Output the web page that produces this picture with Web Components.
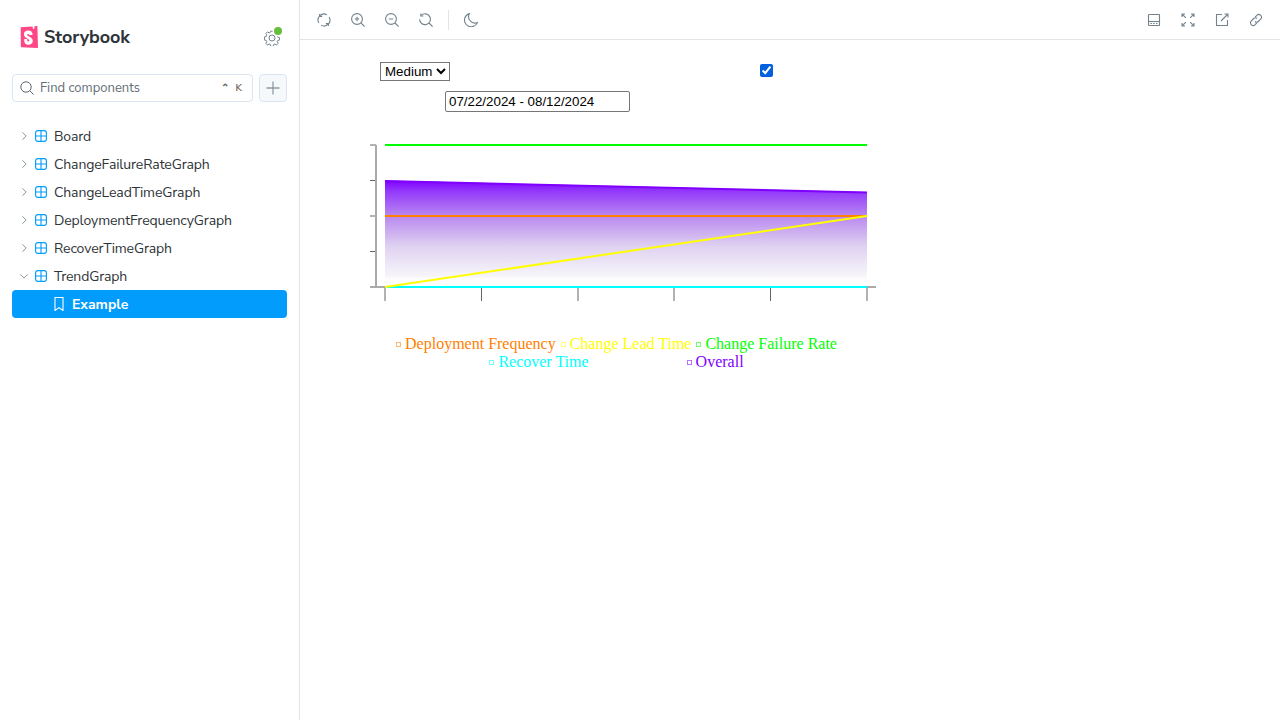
<!DOCTYPE html>
<html>
<head>
<meta charset="utf-8">
<title>Storybook</title>
<style>
  html, body { margin: 0; height: 100%; background: #fff; }
  body { display: flex; width: 1280px; height: 720px; overflow: hidden; }
</style>
</head>
<body>
<sb-sidebar>
  <sb-tree-item kind="component" label="Board"></sb-tree-item>
  <sb-tree-item kind="component" label="ChangeFailureRateGraph"></sb-tree-item>
  <sb-tree-item kind="component" label="ChangeLeadTimeGraph"></sb-tree-item>
  <sb-tree-item kind="component" label="DeploymentFrequencyGraph"></sb-tree-item>
  <sb-tree-item kind="component" label="RecoverTimeGraph"></sb-tree-item>
  <sb-tree-item kind="component" label="TrendGraph" open></sb-tree-item>
  <sb-tree-item kind="story" label="Example" selected></sb-tree-item>
</sb-sidebar>
<sb-main>
  <trend-graph></trend-graph>
</sb-main>

<script>
const ICONS = {
  sync: '<path d="M1.9 10A5.9 5.9 0 0 1 10 1.900M12.100 4A5.900 5.900 0 0 1 4 12.100"/><path d="M2.600 1l.1 2.500 2.500-.1M11.400 13l-.1-2.500-2.500.1"/>',
  zoomIn: '<circle cx="6" cy="6" r="5.400"/><path d="M10 10l3.600 3.600M6 3.800v4.400M3.800 6h4.400"/>',
  zoomOut: '<circle cx="6" cy="6" r="5.400"/><path d="M10 10l3.600 3.600M3.800 6h4.400"/>',
  zoomReset: '<path d="M2.300 2.300A5.400 5.400 0 1 1 .6 6.200M10 10l3.600 3.600"/><path d="M1.800 .6v2.400h2.600"/>',
  moon: '<path d="M5.400 .6a6.400 6.400 0 0 0 8 9A6.700 6.700 0 1 1 5.400 .6z"/>',
  panel: '<rect x="1.500" y="1.500" width="11" height="11" rx=".4"/><path d="M1.500 8.500h11"/><path d="M3.400 10.500h1.500M6.200 10.500h1.500M9 10.500h1.500"/>',
  expand: '<path d="M1 4V1h3M10 1h3v3M13 10v3h-3M4 13H1v-3M1.200 1.200l3.600 3.600M12.800 1.200L9.200 4.800M12.800 12.800L9.200 9.200M1.200 12.800l3.600-3.600"/>',
  share: '<path d="M7 1.500H1.500v11h11V7"/><path d="M6 8l7-7M9.500 1H13v3.500"/>',
  link: '<path d="M6.100 4.100l2-2a2.300 2.300 0 0 1 3.300 0l.5.5a2.300 2.300 0 0 1 0 3.300L9.300 8.500a2.300 2.300 0 0 1-3.300 0"/><path d="M7.900 9.900l-2 2a2.300 2.300 0 0 1-3.300 0l-.5-.5a2.300 2.300 0 0 1 0-3.300L4.700 5.500a2.300 2.300 0 0 1 3.300 0"/>',
  search: '<circle cx="6" cy="6" r="5.200"/><path d="M9.800 9.800l3.700 3.700"/>',
  plus: '<path d="M7 .5v13M.5 7h13"/>',
  bookmark: '<path d="M3 .5h8v13L7 10.600 3 13.500z"/>',
  component: '<rect x=".7" y=".7" width="12.600" height="12.600" rx="2.600"/><path d="M7 .7v12.600M.7 7h12.600"/>',
  right: '<path d="M4.800 1.800L10 7l-5.200 5.200"/>',
  down: '<path d="M1.800 4.800L7 10l5.200-5.200"/>'
};

function icon(name, size, color, width) {
  return `<svg width="${size}" height="${size}" viewBox="0 0 14 14" fill="none" stroke="${color}" stroke-width="${width || 1}">${ICONS[name]}</svg>`;
}

class SbSidebar extends HTMLElement {
  constructor() {
    super();
    this.attachShadow({ mode: "open" });
  }

  connectedCallback() {
    this.shadowRoot.innerHTML = `
      <style>
        :host {
          display: block;
          width: 299px;
          flex: none;
          height: 100%;
          border-right: 1px solid #e4e4e4;
          font-family: "Nunito Sans", "Noto Sans", sans-serif;
          color: #2e3438;
        }
        .head {
          display: flex;
          align-items: center;
          justify-content: space-between;
          height: 22px;
          padding: 26px 19px 0 20px;
        }
        .brand { display: flex; align-items: center; gap: 6px; }
        .brand span {
          font-size: 18px;
          font-weight: 700;
          letter-spacing: -.1px;
        }
        .gear { position: relative; width: 16px; height: 16px; margin-top: 2px; }
        .gear i {
          position: absolute;
          right: -2px;
          top: -3px;
          width: 8px;
          height: 8px;
          border-radius: 50%;
          background: #66bf3c;
          box-shadow: 0 0 0 1.500px #fff;
        }
        .search-row {
          display: flex;
          gap: 6px;
          margin: 26px 12px 20px;
        }
        .search {
          flex: 1;
          height: 26px;
          display: flex;
          align-items: center;
          gap: 6px;
          padding: 0 10px 0 7px;
          border: 1px solid #d9e6f1;
          border-radius: 4px;
          font-size: 13px;
          color: #646e78;
        }
        .search .txt { flex: 1; }
        .search .keys { display: flex; gap: 7px; font-size: 10px; font-weight: 600; color: #6b6258; }
        .add {
          width: 26px;
          height: 26px;
          flex: none;
          display: grid;
          place-items: center;
          border: 1px solid #d9e6f1;
          border-radius: 4px;
          background: #f6f9fc;
        }
        .tree { margin: 0 12px; }
      </style>
      <div class="head">
        <div class="brand">
          <svg width="18" height="22" viewBox="0 0 18 22">
            <path d="M.7 1.200L12.800 .5l-.1 2.300 1.700-.1.100-2.400L17.400 0 18 21.300a.7.700 0 0 1-.7.700L1.500 21.300a.7.700 0 0 1-.7-.7z" fill="#ff4785"/>
            <path d="M9.300 8.800c0 .4 2.900.2 3.300-.1 0-2.800-1.500-4.300-4.300-4.300S3.900 5.900 3.900 8.200c0 4 5.400 4.100 5.400 6.300 0 .6-.3 1-.9 1-.9 0-1.200-.4-1.200-2.100 0-.4-2.900-.4-3 0-.2 4.100 2.300 5.300 4.200 5.300 2.500 0 4.400-1.300 4.400-3.700 0-4.200-5.500-4.100-5.500-6.200 0-.8.500-.9.900-.9.400 0 1.100.1 1.100 1.900z" fill="#fff"/>
          </svg>
          <span>Storybook</span>
        </div>
        <div class="gear">
          <svg width="16" height="16" viewBox="0 0 16 16" fill="none" stroke="#73828c" stroke-width="1">
            <circle cx="8" cy="8" r="3"/>
            <path d="M6.800 1.200h2.400l.4 1.800 1.300.6 1.600-1 1.700 1.700-1 1.600.6 1.300 1.800.4v2.400l-1.800.4-.6 1.300 1 1.600-1.700 1.700-1.600-1-1.300.6-.4 1.800H6.800l-.4-1.800-1.300-.6-1.600 1-1.700-1.700 1-1.600-.6-1.300-1.800-.4V6.900l1.800-.4.600-1.300-1-1.600 1.700-1.700 1.600 1 1.300-.6z"/>
          </svg>
          <i></i>
        </div>
      </div>
      <div class="search-row">
        <div class="search">
          ${icon("search", 14, "#5c6870")}
          <span class="txt">Find components</span>
          <span class="keys"><span>⌃</span><span>K</span></span>
        </div>
        <div class="add">${icon("plus", 14, "#8e9ba5", 1.3)}</div>
      </div>
      <div class="tree"><slot></slot></div>
    `;
  }
}
customElements.define("sb-sidebar", SbSidebar);

class SbTreeItem extends HTMLElement {
  constructor() {
    super();
    this.attachShadow({ mode: "open" });
  }

  connectedCallback() {
    const label = this.getAttribute("label");
    const isStory = this.getAttribute("kind") === "story";
    const lead = isStory
      ? `<span class="pad"></span>${icon("bookmark", 14, "#fff", 1.1)}`
      : `${icon(this.hasAttribute("open") ? "down" : "right", 10, "#73828c", 1.2)}${icon("component", 12, "#029cfd", 1.3)}`;
    this.shadowRoot.innerHTML = `
      <style>
        :host {
          display: flex;
          align-items: center;
          height: 28px;
          padding-left: 7px;
          font-size: 14px;
          letter-spacing: -.13px;
          border-radius: 4px;
          box-sizing: border-box;
        }
        :host([selected]) {
          background: #029cfd;
          color: #fff;
          font-weight: 700;
          letter-spacing: 0;
        }
        svg { flex: none; }
        svg + svg { margin-left: 6px; }
        .pad { width: 33px; }
        .label { margin-left: 7px; }
        :host([selected]) .label { margin-left: 6px; }
      </style>
      ${lead}<span class="label">${label}</span>
    `;
  }
}
customElements.define("sb-tree-item", SbTreeItem);

class SbToolButton extends HTMLElement {
  constructor() {
    super();
    this.attachShadow({ mode: "open" });
  }

  connectedCallback() {
    this.shadowRoot.innerHTML = `
      <style>
        :host {
          display: grid;
          place-items: center;
          width: 28px;
          height: 28px;
        }
      </style>
      ${icon(this.getAttribute("icon"), 14, "#73828c", 1.1)}
    `;
  }
}
customElements.define("sb-tool-button", SbToolButton);

class SbMain extends HTMLElement {
  constructor() {
    super();
    this.attachShadow({ mode: "open" });
  }

  connectedCallback() {
    this.shadowRoot.innerHTML = `
      <style>
        :host {
          display: flex;
          flex-direction: column;
          flex: 1;
          min-width: 0;
        }
        .bar {
          display: flex;
          align-items: center;
          justify-content: space-between;
          flex: none;
          height: 39px;
          padding: 0 10px;
          border-bottom: 1px solid #e4e4e4;
        }
        .tools { display: flex; align-items: center; gap: 6px; }
        .sep { width: 1px; height: 20px; background: #e4e4e4; margin: 0 2px; }
        .canvas { flex: 1; padding: 22px 0 0 80px; }
      </style>
      <div class="bar">
        <div class="tools">
          <sb-tool-button icon="sync"></sb-tool-button>
          <sb-tool-button icon="zoomIn"></sb-tool-button>
          <sb-tool-button icon="zoomOut"></sb-tool-button>
          <sb-tool-button icon="zoomReset"></sb-tool-button>
          <span class="sep"></span>
          <sb-tool-button icon="moon"></sb-tool-button>
        </div>
        <div class="tools">
          <sb-tool-button icon="panel"></sb-tool-button>
          <sb-tool-button icon="expand"></sb-tool-button>
          <sb-tool-button icon="share"></sb-tool-button>
          <sb-tool-button icon="link"></sb-tool-button>
        </div>
      </div>
      <div class="canvas"><slot></slot></div>
    `;
  }
}
customElements.define("sb-main", SbMain);

class TrendGraph extends HTMLElement {
  constructor() {
    super();
    this.attachShadow({ mode: "open" });
  }

  connectedCallback() {
    const ticksY = [145, 180.500, 216, 251.500, 287].map(y => `<path d="M370 ${y}h6"/>`).join("");
    const ticksX = [385, 481.500, 578, 674, 770.500, 867].map(x => `<path d="M${x} 287v14"/>`).join("");
    this.shadowRoot.innerHTML = `
      <style>
        :host {
          display: block;
          width: 500px;
          font-family: "Liberation Serif", serif;
        }
        .filters {
          display: flex;
          align-items: flex-start;
          justify-content: space-between;
          width: 393px;
          height: 29px;
        }
        select {
          font: 13.333px "Liberation Sans", sans-serif;
          height: 19px;
          width: 70px;
          padding: 0;
          margin: 0;
          background: #fff;
          color: #000;
        }
        input[type=checkbox] { margin: 2px 0 0; width: 13px; height: 13px; accent-color: #0060df; }
        input[type=text] {
          display: block;
          box-sizing: border-box;
          width: 185px;
          height: 21px;
          margin: 0 0 0 65px;
          padding: 1px 3px;
          font: 13.333px "Liberation Sans", sans-serif;
          border: 1px solid #767676;
          border-radius: 2px;
          color: #000;
        }
        svg.chart { display: block; margin: 11px 0 0 -20px; }
      </style>
      <div class="filters">
        <select><option>Medium</option></select>
        <input type="checkbox" checked>
      </div>
      <input type="text" value="07/22/2024 - 08/12/2024">
      <svg class="chart" width="520" height="190" viewBox="360 123 520 190">
        <defs>
          <linearGradient id="fill" x1="0" y1="0" x2="0" y2="1">
            <stop offset="0" stop-color="#8000ff"/>
            <stop offset=".1" stop-color="#9438fb"/>
            <stop offset=".33" stop-color="#b887f0"/>
            <stop offset=".62" stop-color="#dfd2f1"/>
            <stop offset=".91" stop-color="#f8f7fb"/>
            <stop offset=".92" stop-color="#fdfdfe"/>
            <stop offset="1" stop-color="#ffffff"/>
          </linearGradient>
        </defs>
        <g fill="none" stroke="#666" stroke-width="1">${ticksY}${ticksX}</g>
        <path d="M376 145v142M370 287h506" fill="none" stroke="#aaa" stroke-width="2"/>
        <path d="M385 180.500L867 192V287H385z" fill="url(#fill)"/>
        <path d="M385 181L867 192.500" fill="none" stroke="#8000ff" stroke-width="2"/>
        <path d="M385 216H867" fill="none" stroke="#ff8000" stroke-width="2"/>
        <path d="M385 145H867" fill="none" stroke="#00ff00" stroke-width="2"/>
        <path d="M385 287H867" fill="none" stroke="#00ffff" stroke-width="2"/>
        <path d="M385 287L867 216" fill="none" stroke="#ffff00" stroke-width="2"/>
      </svg>
      <trend-legend></trend-legend>
    `;
  }
}
customElements.define("trend-graph", TrendGraph);

class TrendLegend extends HTMLElement {
  constructor() {
    super();
    this.attachShadow({ mode: "open" });
  }

  connectedCallback() {
    const item = (color, text) => `<span class="item" style="color:${color}"><i></i>${text}</span>`;
    this.shadowRoot.innerHTML = `
      <style>
        :host {
          display: block;
          width: 472px;
          margin: 22px 0 0 0;
          font-size: 16px;
          line-height: 18px;
        }
        .row { display: flex; justify-content: center; gap: 4px; }
        .row.wide { gap: 97px; }
        .item { white-space: nowrap; }
        i {
          display: inline-block;
          box-sizing: border-box;
          width: 5px;
          height: 5px;
          margin: 0 4px 2px 1px;
          border: 1px solid currentColor;
          vertical-align: middle;
          opacity: .55;
        }
      </style>
      <div class="row">
        ${item("#ff8000", "Deployment Frequency")}
        ${item("#ffff00", "Change Lead Time")}
        ${item("#00ff00", "Change Failure Rate")}
      </div>
      <div class="row wide">
        ${item("#00ffff", "Recover Time")}
        ${item("#8000ff", "Overall")}
      </div>
    `;
  }
}
customElements.define("trend-legend", TrendLegend);
</script>
</body>
</html>
